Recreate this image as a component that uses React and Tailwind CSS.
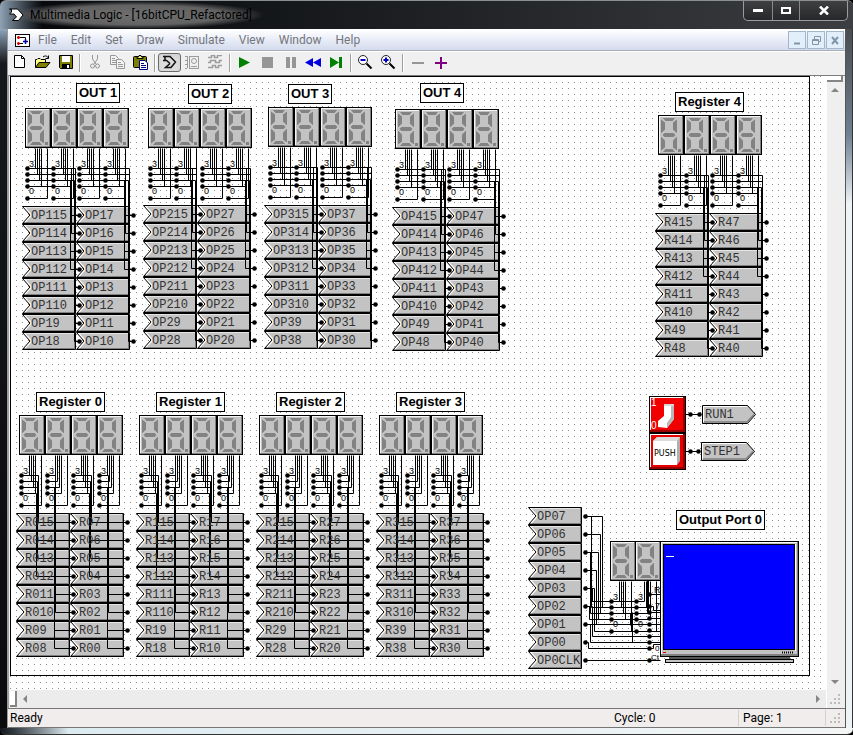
import React from "react";

const OUT_WIRES = { end: [53, 53, 52, 49], high: [49, 49, 48, 48], low: [53, 53, 52, 52] };

const BANKS = [
  { title: "OUT 1", tx: 66, ty: 7, dx: 15, dy: 32, gx: 12, gy: 130, prefix: "OP1", style: "out" },
  { title: "OUT 2", tx: 178, ty: 8, dx: 138, dy: 32, gx: 133, gy: 129, prefix: "OP2", style: "out" },
  { title: "OUT 3", tx: 278, ty: 8, dx: 258, dy: 31, gx: 254, gy: 129, prefix: "OP3", style: "out" },
  { title: "OUT 4", tx: 410, ty: 7, dx: 385, dy: 33, gx: 382, gy: 131, prefix: "OP4", style: "out" },
  { title: "Register 4", tx: 665, ty: 16, dx: 648, dy: 39, gx: 645, gy: 137, prefix: "R4", style: "out" },
  { title: "Register 0", tx: 26, ty: 316, dx: 9, dy: 339, gx: 6, gy: 437, prefix: "R0", style: "reg" },
  { title: "Register 1", tx: 146, ty: 316, dx: 129, dy: 339, gx: 126, gy: 437, prefix: "R1", style: "reg" },
  { title: "Register 2", tx: 266, ty: 316, dx: 249, dy: 339, gx: 246, gy: 437, prefix: "R2", style: "reg" },
  { title: "Register 3", tx: 386, ty: 316, dx: 369, dy: 339, gx: 366, gy: 437, prefix: "R3", style: "reg" },
];

const PORT_TAGS = ["OP07", "OP06", "OP05", "OP04", "OP03", "OP02", "OP01", "OP00", "OP0CLK"];

const at = (left, top) => ({ left, top });

function Digit() {
  return (
    <svg width="26" height="40" viewBox="0 0 26 40" className="block shrink-0" aria-hidden="true">
      <rect width="26" height="40" fill="#000" />
      <rect x="1" y="1" width="24" height="38" fill="#808080" />
      <rect x="1" y="1" width="23" height="37" fill="#f4f4f4" />
      <rect x="2" y="2" width="22" height="36" fill="#c3c3c3" />
      <g fill="#828282">
        <path d="M5 3H17L14.5 6H7.500Z" />
        <path d="M3 4.500L7 7.500V14.500L3.500 18H3Z" />
        <path d="M19 4.500L15 7.500V14.500L18.500 18H19Z" />
        <path d="M4.500 20L6.500 18H15.500L17.500 20L15.500 22H6.500Z" />
        <path d="M3 22H3.500L7 25.500V32.500L3 35.500Z" />
        <path d="M19 22H18.500L15 25.500V32.500L19 35.500Z" />
        <path d="M5 37H17L14.500 34H7.500Z" />
        <rect x="20" y="34" width="3" height="3" />
      </g>
    </svg>
  );
}

function Tag({ children }) {
  return (
    <li className="grid h-[18px] w-[54px] items-center">
      <svg width="54" height="18" viewBox="0 0 54 18" className="col-start-1 row-start-1 block" aria-hidden="true">
        <path d="M0 0H54V18H0L8 9Z" fill="#c3c3c3" />
        <path d="M1 16H52V1H53V17H1Z" fill="#808080" />
        <path d="M2 1.500H52" stroke="#e4e4e4" />
        <path d="M2 1L9.500 9L3 16" fill="none" stroke="#fff" strokeWidth="1.500" />
        <path d="M0.500 0.500H53.500V17.500H0.500L8 9Z" fill="none" stroke="#000" />
      </svg>
      <span className="z-10 col-start-1 row-start-1 whitespace-nowrap pl-[9px] pt-px text-[12px] leading-[16px] text-[#333]">
        {children}
      </span>
    </li>
  );
}

function TagColumn({ names }) {
  return (
    <ul className="flex flex-col font-['Liberation_Mono',monospace]">
      {names.map((n) => (
        <Tag key={n}>{n}</Tag>
      ))}
    </ul>
  );
}

function Title({ x, y, children }) {
  return (
    <h2
      className="absolute whitespace-nowrap border border-black bg-white px-[2px] text-[13px] font-bold leading-[18px] text-black"
      style={at(x, y)}
    >
      {children}
    </h2>
  );
}

function Bank({ bank }) {
  const high = [15, 14, 13, 12, 11, 10, 9, 8].map((n) => bank.prefix + n);
  const low = [7, 6, 5, 4, 3, 2, 1, 0].map((n) => bank.prefix + n);
  return (
    <section aria-label={bank.title}>
      <Title x={bank.tx} y={bank.ty}>{bank.title}</Title>
      <div className="absolute flex" style={at(bank.dx, bank.dy)}>
        <Digit />
        <Digit />
        <Digit />
        <Digit />
      </div>
      <div className="absolute flex" style={at(bank.gx, bank.gy)}>
        <TagColumn names={high} />
        <TagColumn names={low} />
      </div>
    </section>
  );
}

function BankWires({ bank }) {
  const { dx, dy, gx, gy } = bank;
  const lines = [];
  const dots = [];
  const labels = [];
  const line = (d) => lines.push(d);
  const rowY = (i) => dy + 60 + 6 * i;
  const tagY = (i) => gy + 9 + 18 * i;
  for (let d = 0; d < 4; d++) {
    const x = dx + 26 * d;
    for (let i = 0; i < 4; i++) {
      line(`M${x + 10 + 2 * i} ${dy + 40}V${rowY(i)}H${x + 2}`);
      dots.push([x + 2, rowY(i)]);
    }
    line(`M${x + 22} ${dy + 40}V${dy + 90}H${x + 2}`);
    dots.push([x + 2, dy + 90]);
    labels.push(["3", x + 4, dy + 59], ["0", x + 4, dy + 86]);
  }
  for (let c = 0; c < 2; c++) {
    const g = gx + 54 * c;
    for (let i = 0; i < 8; i++) dots.push([g + 57, tagY(i)]);
    for (let i = 0; i < 4; i++) {
      if (bank.style === "out") {
        line(`M${dx + 52 * c + 2} ${rowY(i)}H${g + OUT_WIRES.end[i]}`);
        line(`M${g + OUT_WIRES.high[i]} ${rowY(i)}V${tagY(i)}H${g + 57}`);
        line(`M${g + OUT_WIRES.low[i]} ${rowY(i)}V${tagY(i + 4)}H${g + 57}`);
      } else {
        const a = gx + (c ? 73 : 20) + [2, 1, 1, 0][i];
        const b = gx + (c ? 91 : 38) + [1, 1, 0, 0][i];
        line(`M${dx + 52 * c + 2} ${rowY(i)}H${a}V${tagY(i)}H${g + 57}`);
        line(`M${dx + 52 * c + 28} ${rowY(i)}H${b}V${tagY(i + 4)}H${g + 57}`);
      }
    }
  }
  return (
    <g>
      <path d={lines.join("")} fill="none" stroke="#000" transform="translate(0.5 0.5)" />
      {dots.map(([x, y], i) => (
        <circle key={i} cx={x + 0.5} cy={y + 0.5} r="2.300" />
      ))}
      {labels.map(([t, x, y], i) => (
        <text key={i} x={x} y={y} fontSize="9">{t}</text>
      ))}
    </g>
  );
}

function PortWires() {
  const rows = PORT_TAGS.map((_, i) => 16 + 18 * i);
  const outer = [
    "M65 16H82V107H130", "M65 34H80V113H130", "M65 52H78V119H130", "M65 70H76V124H140",
    "M65 88H74V131H140", "M65 106H72V136H140", "M65 124H140", "M65 124H70V142H140",
    "M65 142H68V148H130", "M65 160H140", "M71 16V101H116", "M70 52V113H91", "M71 52V107H116",
    "M72 88V101", "M69 106V119H116", "M130 94H140", "M130 106H133V110H140", "M130 112H140",
    "M130 118H140", "M130 148H133V144H140", "M110 125V113H130", "M112 142V112", "M111 118V125",
    "M127 80V112", "M128 80V113",
  ];
  const inner = [];
  const dots = rows.map((y) => [65, y]);
  [91, 116].forEach((x) => {
    for (let i = 0; i < 4; i++) {
      inner.push(`M${x + 8 + 2 * i} 81V${101 + 6 * i}H${x}`);
      dots.push([x, 101 + 6 * i]);
    }
    inner.push(`M${x + 20} 81V131H${x}`);
    dots.push([x, 131]);
  });
  [94, 106, 112, 118, 124, 130, 136, 142, 148, 160].forEach((y) => dots.push([129, y]));
  return (
    <g transform="translate(510 424)">
      <path d={outer.concat(inner).join("")} fill="none" stroke="#000" transform="translate(0.5 0.5)" />
      {dots.map(([x, y], i) => (
        <circle key={i} cx={x + 0.5} cy={y + 0.5} r="2.300" />
      ))}
      <g fontSize="9">
        <text x="93" y="100">3</text>
        <text x="118" y="100">3</text>
        <text x="93" y="127">0</text>
        <text x="118" y="127">0</text>
        <text x="134" y="93">R</text>
        <text x="135" y="109">7</text>
      </g>
      <g fontSize="8">
        <text x="135" y="151">0</text>
        <text x="131" y="160">Ct</text>
      </g>
    </g>
  );
}

function Monitor() {
  return (
    <svg width="139" height="122" viewBox="0 0 139 122" className="block" role="img" aria-label="Terminal screen">
      <rect width="139" height="116" fill="#000" />
      <rect x="1" y="1" width="137" height="114" fill="#808080" />
      <rect x="1" y="1" width="136" height="112" fill="#fff" />
      <rect x="2" y="2" width="135" height="111" fill="#c3c3c3" />
      <rect x="3" y="3" width="132" height="106" fill="#000" />
      <rect x="4" y="4" width="130" height="104" fill="#0000fe" />
      <rect x="135" y="3" width="1" height="107" fill="#fff" />
      <rect x="6" y="15" width="8" height="1" fill="#fff" />
      <rect x="3" y="111" width="3" height="1" fill="#e00000" />
      <path d="M122 111.500H134" stroke="#000" strokeWidth="2" strokeDasharray="1 1" />
      <rect x="9" y="116" width="121" height="2" fill="#555" />
      <rect x="5" y="118" width="129" height="4" fill="#000" />
      <rect x="6" y="119" width="127" height="2" fill="#c3c3c3" />
    </svg>
  );
}

function OutTag({ x, y, children }) {
  return (
    <div className="absolute grid h-[19px] w-[54px] items-center font-['Liberation_Mono',monospace]" style={at(x, y)}>
      <svg width="54" height="19" viewBox="0 0 54 19" className="col-start-1 row-start-1 block" aria-hidden="true">
        <path d="M0.500 0.500H45.500L53.500 9.500L45.500 18.500H0.500Z" fill="#c3c3c3" stroke="#000" />
        <path d="M1.500 17V1.500H45" fill="none" stroke="#fff" />
        <path d="M2 17H45L52 9.500" fill="none" stroke="#808080" strokeWidth="1.500" />
      </svg>
      <span className="z-10 col-start-1 row-start-1 pl-[3px] text-[12px] leading-[16px] text-[#333]">{children}</span>
    </div>
  );
}

function Switches() {
  return (
    <div className="absolute flex flex-col" style={at(639, 320)}>
      <button type="button" aria-label="Run switch" className="block">
        <svg width="37" height="37" viewBox="0 0 37 37" className="block">
          <rect width="37" height="37" fill="#000" />
          <rect x="1" y="1" width="35" height="35" fill="#900" />
          <rect x="1" y="1" width="33" height="33" fill="#fff" />
          <rect x="2" y="2" width="32" height="32" fill="#f00000" />
          <path d="M15 8H25V23L18 32L9 31V25L15 20Z" fill="#fff" />
          <path d="M22 8H25V23L18 32V27L22 21Z" fill="#b8b8b8" />
          <path d="M15 8H25V10H15Z" fill="#d8d8d8" />
          <text x="2" y="10" fontSize="10" fill="#fff">1</text>
          <text x="2" y="33" fontSize="10" fill="#fff">0</text>
        </svg>
      </button>
      <button type="button" aria-label="Step button" className="block">
        <svg width="37" height="37" viewBox="0 0 37 37" className="block">
          <rect width="37" height="37" fill="#000" />
          <rect x="1" y="1" width="35" height="35" fill="#900" />
          <rect x="1" y="1" width="33" height="33" fill="#fff" />
          <rect x="2" y="2" width="32" height="32" fill="#e80000" />
          <path d="M4 8L8 4H31V28L28 32H4Z" fill="#b0b0b0" />
          <path d="M4 8L8 4H31L28 8Z" fill="#dcdcdc" />
          <rect x="4" y="8" width="24" height="24" fill="#fff" />
          <text x="5" y="23" fontSize="8" fill="#000" fontFamily="DejaVu Sans">PUSH</text>
        </svg>
      </button>
    </div>
  );
}

const ICONS = {
  new: (
    <>
      <path d="M3.500 0.500H10.500L13.500 3.500V12.500H3.500Z" fill="#fff" stroke="#000" />
      <path d="M10.500 0.500V3.500H13.500" fill="none" stroke="#000" />
    </>
  ),
  open: (
    <>
      <path d="M1.500 12.500V4.500H3L4 3.500H6L7 4.500H11.500V7.500" fill="#ffff80" stroke="#000" />
      <path d="M1.500 12.500L5 7.500H16L12 12.500Z" fill="#808000" stroke="#000" />
      <path d="M9 2C10.500 0.500 12.500 0.500 14 2.500M14.500 0.500V3.500H11.500" fill="none" stroke="#000" />
    </>
  ),
  save: (
    <>
      <path d="M2.500 0.500H15.500V13.500H3.500L2.500 12.500Z" fill="#808000" stroke="#000" />
      <rect x="5" y="1" width="8" height="6" fill="#fff" />
      <rect x="5" y="9" width="8" height="4" fill="#000" />
      <rect x="10" y="10" width="2" height="3" fill="#fff" />
    </>
  ),
  cut: (
    <g fill="none" stroke="#969696">
      <path d="M6.500 0V4L10 9M11.500 0V4L8 9" />
      <circle cx="6.500" cy="11" r="2" />
      <circle cx="11.500" cy="11" r="2" />
    </g>
  ),
  copy: (
    <g fill="#f4f4f4" stroke="#969696">
      <path d="M1.500 0.500H6.500L9.500 3.500V9.500H1.500Z" />
      <path d="M3 3.500H6M3 5.500H8M3 7.500H8" />
      <path d="M7.500 4.500H12.500L15.500 7.500V13.500H7.500Z" />
      <path d="M9 7.500H12M9 9.500H14M9 11.500H14" />
    </g>
  ),
  paste: (
    <>
      <rect x="1.500" y="1.500" width="13" height="11" rx="1" fill="#808000" stroke="#000" />
      <path d="M5 3.500H11V2H9.500L9 0.500H7L6.500 2H5Z" fill="#ffff80" stroke="#000" />
      <path d="M7.500 5.500H13L15.500 8V14.500H7.500Z" fill="#fff" stroke="#000080" />
      <path d="M9 8.500H12M9 10.500H14M9 12.500H14" stroke="#000080" />
    </>
  ),
  gate: (
    <path
      d="M2 1.500H9L14.500 7L10 12.500H4.500L8.500 9V8L5.500 5.500H2M4 1.500V5.500"
      fill="none"
      stroke="#111"
      strokeWidth="1.500"
    />
  ),
  scope: (
    <g fill="none" stroke="#9c9c9c">
      <path d="M3.500 1V13M1 1.500H3M1 5.500H3M1 9.500H3M1 13.500H3" />
      <rect x="5.500" y="1.500" width="9" height="12" />
      <circle cx="10" cy="6" r="2.500" />
      <path d="M7 11.500H13" />
    </g>
  ),
  wave: (
    <path
      d="M1 2.500H4.500V0.500H7.500V2.500H10.500V0.500H15M1 7.500H3.500V5.500H8.500V7.500H12.500V5.500H15M1 12.500H5.500V10.500H8.500V12.500H11.500V10.500H15"
      fill="none"
      stroke="#9c9c9c"
      strokeWidth="1.500"
    />
  ),
  play: <path d="M3 2L14 7.500L3 13Z" fill="#008000" />,
  stop: <rect x="3" y="2" width="11" height="11" fill="#969696" />,
  pause: <path d="M4 2H8V13H4ZM10 2H14V13H10Z" fill="#969696" />,
  rewind: <path d="M8 3V12L0 7.500ZM16 3V12L8 7.500Z" fill="#0000e0" />,
  step: <path d="M2 2L11 7.500L2 13ZM11 2H14V13H11Z" fill="#008000" />,
  zoomOut: (
    <>
      <circle cx="6" cy="5" r="4.500" fill="#fff" stroke="#222" />
      <path d="M3.500 5H8.500" stroke="#0000c0" strokeWidth="2" />
      <path d="M9.500 8.500L14.500 13.500" stroke="#000" strokeWidth="2" />
    </>
  ),
  zoomIn: (
    <>
      <circle cx="6" cy="5" r="4.500" fill="#fff" stroke="#222" />
      <path d="M3.500 5H8.500M6 2.500V7.500" stroke="#0000c0" strokeWidth="2" />
      <path d="M9.500 8.500L14.500 13.500" stroke="#000" strokeWidth="2" />
    </>
  ),
  minus: <rect x="3" y="7" width="12" height="2" fill="#969696" />,
  plus: <path d="M3 7H8V2H10V7H15V9H10V14H8V9H3Z" fill="#800080" />,
};

const TOOL_GROUPS = [
  [["New", "new"], ["Open", "open"], ["Save", "save"]],
  [["Cut", "cut"], ["Copy", "copy"], ["Paste", "paste"]],
  [["Palette", "gate"], ["Front panel", "scope"], ["Timing", "wave"]],
  [["Run", "play"], ["Stop", "stop"], ["Pause", "pause"], ["Reset", "rewind"], ["Single step", "step"]],
  [["Zoom out", "zoomOut"], ["Zoom in", "zoomIn"]],
  [["Remove page", "minus"], ["Add page", "plus"]],
];

function Toolbar() {
  return (
    <div role="toolbar" className="flex h-6 items-center border-t border-white bg-[#f0f0f0] pb-[2px]">
      {TOOL_GROUPS.map((group, gi) => (
        <div key={gi} className="flex items-center">
          {gi > 0 && <span className="mx-[2px] h-[18px] w-[2px] border-l border-[#a0a0a0] bg-white" />}
          {group.map(([label, icon]) => (
            <button
              key={icon}
              type="button"
              aria-label={label}
              className={
                "flex h-[19px] w-[23px] items-center justify-center rounded-[3px] border " +
                (icon === "gate" ? "border-[#6a6a6a] bg-[#dcdcdc] shadow-inner" : "border-transparent")
              }
            >
              <svg width="17" height="15" viewBox="0 0 17 15" className="block shrink-0">{ICONS[icon]}</svg>
            </button>
          ))}
        </div>
      ))}
    </div>
  );
}

function TitleBar() {
  return (
    <header className="flex h-[29px] items-start rounded-t-md border-t border-[#8a8f94] bg-linear-to-r from-[#8fa3b5] via-[#07090c] via-5% to-[#3c3e41] pl-[9px]">
      <div className="flex h-[28px] items-center bg-[radial-gradient(closest-side,#707070_0%,#626262_70%,transparent_100%)]">
        <svg width="15" height="14" viewBox="0 0 15 14" className="block" aria-hidden="true">
          <path d="M0.500 1H8.500L14 7L9.500 12.500H3.500L7.500 9L5 6H0.500L2.500 4V1.500Z" fill="#fff" stroke="#000" />
        </svg>
        <h1 className="whitespace-nowrap pl-[6px] pr-3 text-[12px] font-normal leading-[16px] text-black">
          Multimedia Logic - [16bitCPU_Refactored]
        </h1>
      </div>
      <div className="ml-auto mr-[5px] flex h-[20px] rounded-b-[5px] border border-t-0 border-[#9a9c9e] bg-linear-to-b from-[#3e4042] to-[#26282a]">
        <button type="button" aria-label="Minimize" className="flex w-[29px] items-center justify-center border-r border-[#88898b]">
          <span className="h-[3px] w-[10px] bg-white" />
        </button>
        <button type="button" aria-label="Maximize" className="flex w-[27px] items-center justify-center border-r border-[#88898b]">
          <span className="h-[7px] w-[10px] border-2 border-white" />
        </button>
        <button type="button" aria-label="Close" className="flex w-[47px] items-center justify-center">
          <svg width="10" height="9" viewBox="0 0 10 9">
            <path d="M1 0.500L9 8.500M9 0.500L1 8.500" stroke="#fff" strokeWidth="2.500" />
          </svg>
        </button>
      </div>
    </header>
  );
}

const MDI = [
  ["Minimize document", <path key="a" d="M3 8.500H9" stroke="#8195a8" strokeWidth="2" />],
  ["Restore document", <path key="b" d="M4.500 4V1.500H10.500V6.500H8M2.500 4.500H8.500V9.500H2.500ZM2 5.500H9" fill="none" stroke="#8195a8" />],
  ["Close document", <path key="c" d="M3 2L9 9M9 2L3 9" stroke="#8195a8" strokeWidth="2" />],
];

function MenuBar() {
  return (
    <nav className="flex h-[22px] items-center border-t border-b border-t-white border-b-[#a9adb5] bg-linear-to-b from-white via-[#e8ecf7] to-[#d5dbed] pl-[7px]">
      <svg width="15" height="13" viewBox="0 0 15 13" className="block" aria-hidden="true">
        <rect x="0.500" y="0.500" width="14" height="12" fill="#fff" stroke="#000" />
        <path d="M2 3.500H5M2 9.500H5M3.500 2V5M3.500 8V11" stroke="#d00000" strokeWidth="1.500" />
        <path d="M5 3.500H10.500V6M5 9.500H8" fill="none" stroke="#000" />
        <path d="M8 7.500H13M10.500 5V10" stroke="#0000a0" strokeWidth="1.500" />
      </svg>
      <ul className="flex gap-[14px] pl-2 text-[12px] leading-[16px] text-[#73767c]">
        {["File", "Edit", "Set", "Draw", "Simulate", "View", "Window", "Help"].map((m) => (
          <li key={m}>
            <button type="button">{m}</button>
          </li>
        ))}
      </ul>
      <div className="ml-auto flex gap-px pr-px">
        {MDI.map(([label, glyph]) => (
          <button
            key={label}
            type="button"
            aria-label={label}
            className="flex h-[18px] w-[18px] items-center justify-center border border-[#a3b7cb] bg-[#e2effa]"
          >
            <svg width="12" height="11" viewBox="0 0 12 11">{glyph}</svg>
          </button>
        ))}
      </div>
    </nav>
  );
}

function Arrow({ d, label }) {
  return (
    <button type="button" aria-label={label} className="flex h-4 w-4 items-center justify-center">
      <svg width="8" height="8" viewBox="0 0 8 8">
        <path d={d} fill="#868686" />
      </svg>
    </button>
  );
}

function Grip() {
  return (
    <svg width="12" height="12" viewBox="0 0 12 12" className="block" aria-hidden="true">
      <path d="M9 1h2v2h-2zM9 5h2v2h-2zM5 5h2v2h-2zM9 9h2v2h-2zM5 9h2v2h-2zM1 9h2v2h-2z" fill="#bcbcbc" />
    </svg>
  );
}

function Sheet() {
  return (
    <div className="relative h-[600px] w-[800px]">
      <div className="pointer-events-none absolute inset-0 border border-black" />
      {BANKS.map((b) => (
        <Bank key={b.title} bank={b} />
      ))}
      <Switches />
      <OutTag x={692} y={329}>RUN1</OutTag>
      <OutTag x={691} y={366}>STEP1</OutTag>
      <Title x={666} y={434}>Output Port 0</Title>
      <div className="absolute" style={at(518, 431)}>
        <TagColumn names={PORT_TAGS} />
      </div>
      <div className="absolute flex" style={at(600, 465)}>
        <Digit />
        <div className="-ml-px">
          <Digit />
        </div>
      </div>
      <svg
        width="800"
        height="600"
        viewBox="0 0 800 600"
        className="pointer-events-none absolute inset-0 font-['Liberation_Sans',sans-serif]"
        aria-hidden="true"
      >
        {BANKS.map((b) => (
          <BankWires key={b.title} bank={b} />
        ))}
        <PortWires />
        <path d="M676 338.500H690M676 375.500H689" stroke="#000" />
        <circle cx="680.500" cy="338.500" r="2.300" />
        <circle cx="689.500" cy="338.500" r="2.300" />
        <circle cx="680.500" cy="375.500" r="2.300" />
        <circle cx="688.500" cy="375.500" r="2.300" />
      </svg>
      <div className="absolute" style={at(650, 465)}>
        <Monitor />
      </div>
    </div>
  );
}

function Workspace() {
  return (
    <main className="flex min-h-0 flex-1 border-l border-t border-l-[#a0a0a0] border-t-[#7c7c7c] bg-[#f0f0f0] pl-px">
      <div className="flex min-w-0 flex-1 flex-col">
        <div className="relative min-h-0 flex-1 overflow-hidden bg-white font-['Liberation_Sans',sans-serif]">
          <svg className="absolute inset-0 h-full w-full" aria-hidden="true">
            <defs>
              <pattern id="grid" width="6" height="6" patternUnits="userSpaceOnUse">
                <rect width="1" height="1" fill="#8c8c8c" />
              </pattern>
            </defs>
            <rect width="100%" height="100%" fill="url(#grid)" />
          </svg>
          <Sheet />
        </div>
        <div className="flex h-[18px] items-center bg-[#ececec]">
          <span className="h-4 w-[7px] border-b-2 border-r-2 border-[#858585] bg-white" />
          <Arrow label="Scroll left" d="M6 0V8L2 4Z" />
          <span className="flex-1" />
          <Arrow label="Scroll right" d="M2 0V8L6 4Z" />
        </div>
      </div>
      <div className="flex w-[19px] flex-col items-center border-l border-white bg-[#efefef] pr-[2px]">
        <span className="h-[6px] w-4 border-b-2 border-r-2 border-[#858585] bg-white" />
        <Arrow label="Scroll up" d="M0 6H8L4 2Z" />
        <span className="flex-1" />
        <Arrow label="Scroll down" d="M0 2H8L4 6Z" />
        <span className="flex h-[18px] items-center">
          <Grip />
        </span>
      </div>
    </main>
  );
}

function StatusBar() {
  return (
    <footer className="flex h-5 items-center border-b border-t border-[#767676] bg-[#f1eded] pl-[2px] text-[12px] leading-[16px] text-black">
      <span className="flex-1">Ready</span>
      <span className="w-[124px]">Cycle: 0</span>
      <span className="w-[88px] border-l border-r border-[#d4d0d0] pl-1">Page: 1</span>
      <span className="flex w-[19px] justify-end pr-1">
        <Grip />
      </span>
    </footer>
  );
}

export default function App() {
  return (
    <div className="flex h-screen min-h-[400px] flex-col overflow-hidden bg-black font-[Roboto,'Open_Sans',sans-serif]">
      <TitleBar />
      <div className="flex min-h-0 flex-1">
        <div className="w-2 shrink-0 border-r border-[#9a9a9a] bg-linear-to-b from-[#8fa6bd] via-[#15181c] via-5% to-[#0a0b0d]" />
        <div className="flex min-w-0 flex-1 flex-col">
          <MenuBar />
          <Toolbar />
          <Workspace />
          <StatusBar />
        </div>
        <div className="w-2 shrink-0 border-l border-r border-l-[#555] border-r-[#333] bg-linear-to-b from-[#4a4d50] via-[#6f8092] via-15% to-[#eef4f6] to-25%" />
      </div>
      <div className="h-[7px] shrink-0 rounded-b-md border-b border-[#333] bg-linear-to-r from-[#10151a] via-[#dcebf0] via-8% to-[#f4f6f6]" />
    </div>
  );
}
